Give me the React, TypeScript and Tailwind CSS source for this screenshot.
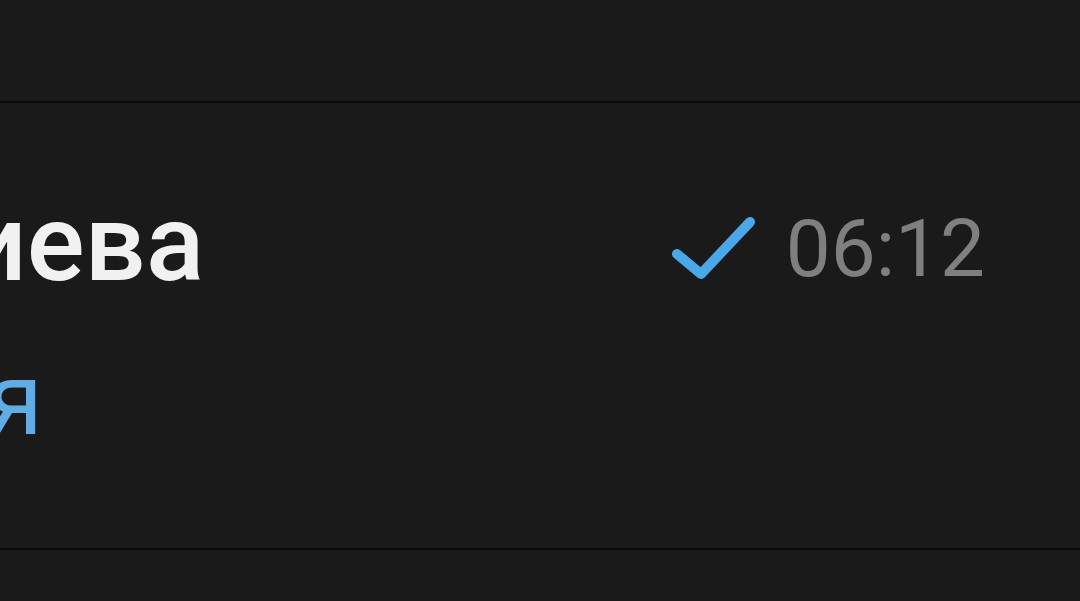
export default function App() {
  return (
    <div className="w-[1080px] h-[601px] overflow-hidden bg-[#1a1a1a] flex flex-col" style={{ fontFamily: "Roboto, 'Noto Sans', sans-serif" }}>
      <div className="h-[101px] shrink-0 bg-[#1a1a1a]" />
      <div className="h-[2px] shrink-0 bg-[#0a0a0a]" />
      <div className="h-[445px] shrink-0 flex justify-between pr-[95px] overflow-hidden">
        <div className="flex flex-col pt-[86px]">
          <div className="ml-[-35px] text-[108px] leading-none font-medium text-[#f1f1f1] whitespace-nowrap">иева</div>
          <div className="mt-[51px] ml-[-13px] text-[102px] leading-none text-[#62ace6] whitespace-nowrap">я</div>
        </div>
        <div className="flex items-start pt-[106px] gap-[30px]">
          <svg width="86" height="64" viewBox="0 0 86 64" className="mt-[6px]">
            <path d="M7 39 L31 59 L80 7" fill="none" stroke="#4aa7e8" strokeWidth="10" strokeLinecap="round" strokeLinejoin="round" />
          </svg>
          <div className="text-[80px] leading-none text-[#7f7f7f]">06:12</div>
        </div>
      </div>
      <div className="h-[2px] shrink-0 bg-[#0a0a0a]" />
      <div className="flex-1 bg-[#1a1a1a]" />
    </div>
  );
}
